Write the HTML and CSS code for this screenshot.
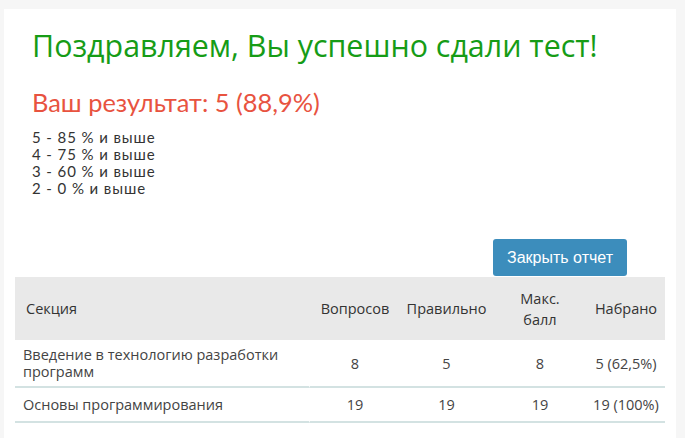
FILE: index.html
```html
<!DOCTYPE html>
<html lang="ru">
<head>
    <meta charset="UTF-8">
    <meta name="viewport" content="width=device-width, initial-scale=1.0">
    <title>Результат теста</title>
    <link rel="stylesheet" href="styles.css">
</head>
<body>
    <div class="report">
        <h1 class="report-title">Поздравляем, Вы успешно сдали тест!</h1>
        <h2 class="report-score">Ваш результат: 5 (88,9%)</h2>
        <div class="grades">
            <div>5 - 85 % и выше</div>
            <div>4 - 75 % и выше</div>
            <div>3 - 60 % и выше</div>
            <div>2 - 0 % и выше</div>
        </div>

        <div class="actions">
            <button class="btn-close">Закрыть отчет</button>
        </div>

        <table class="sections">
            <thead>
                <tr>
                    <th class="col-name">Секция</th>
                    <th>Вопросов</th>
                    <th>Правильно</th>
                    <th>Макс.<br>балл</th>
                    <th>Набрано</th>
                </tr>
            </thead>
            <tbody>
                <tr>
                    <td class="col-name">Введение в технологию разработки программ</td>
                    <td>8</td>
                    <td>5</td>
                    <td>8</td>
                    <td>5 (62,5%)</td>
                </tr>
                <tr>
                    <td class="col-name">Основы программирования</td>
                    <td>19</td>
                    <td>19</td>
                    <td>19</td>
                    <td>19 (100%)</td>
                </tr>
            </tbody>
        </table>
    </div>
</body>
</html>
```

FILE: styles.css
```css
body {
    margin: 0;
    background-color: #f6f6f6;
    font-family: "Open Sans", sans-serif;
}
.report {
    margin: 9px 9px 0 4px;
    padding: 20px 11px 20px 11px;
    background-color: #fff;
    min-height: 420px;
}
.report-title {
    margin: 0 0 0 17px;
    font-size: 30.4px;
    font-weight: normal;
    line-height: 34px;
    color: #169c16;
}
.report-score {
    margin: 24px 0 0 17px;
    font-family: "Lato", sans-serif;
    font-size: 25.4px;
    font-weight: normal;
    line-height: 30px;
    color: #e8533f;
}
.grades {
    margin: 12px 0 0 17px;
    font-family: "Lato", sans-serif;
    font-size: 15px;
    letter-spacing: 0.9px;
    line-height: 17px;
    color: #333;
}
.actions {
    display: flex;
    justify-content: flex-end;
    margin-top: 42px;
    margin-bottom: 1px;
    padding-right: 38px;
}
.btn-close {
    padding: 0 14px;
    height: 37px;
    background-color: #3c8dbc;
    color: #fff;
    border: none;
    border-radius: 3px;
    font-family: "Liberation Sans Narrow", "Liberation Sans", sans-serif;
    font-size: 16px;
    cursor: pointer;
}
.btn-close:hover {
    background-color: #367fa9;
}
.sections {
    width: 100%;
    table-layout: fixed;
    border-collapse: separate;
    border-spacing: 0;
    font-family: "Open Sans", sans-serif;
    font-size: 14.5px;
    color: #444;
}
.sections th,
.sections td {
    box-sizing: border-box;
}
.sections th {
    background-color: #e9e9e9;
    font-weight: normal;
    color: #333;
    height: 63px;
    line-height: 21px;
    padding: 0 4px;
    text-align: center;
}
.sections th:nth-child(1) { width: 295px; }
.sections th:nth-child(2) { width: 90px; }
.sections th:nth-child(3) { width: 93px; }
.sections th:nth-child(4) { width: 94px; }
.sections th:nth-child(5) { width: 78px; }
.sections td {
    padding: 6px 4px;
    line-height: 17px;
    text-align: center;
    border-bottom: 2px solid #d3e2e2;
}
.sections tbody tr:first-child td {
    height: 45px;
}
.sections tbody tr:last-child td {
    height: 35px;
}
.sections .col-name {
    text-align: left;
    padding-left: 11px;
}
.sections td.col-name {
    padding-left: 8px;
    border-right: 1px solid #fff;
}
```
